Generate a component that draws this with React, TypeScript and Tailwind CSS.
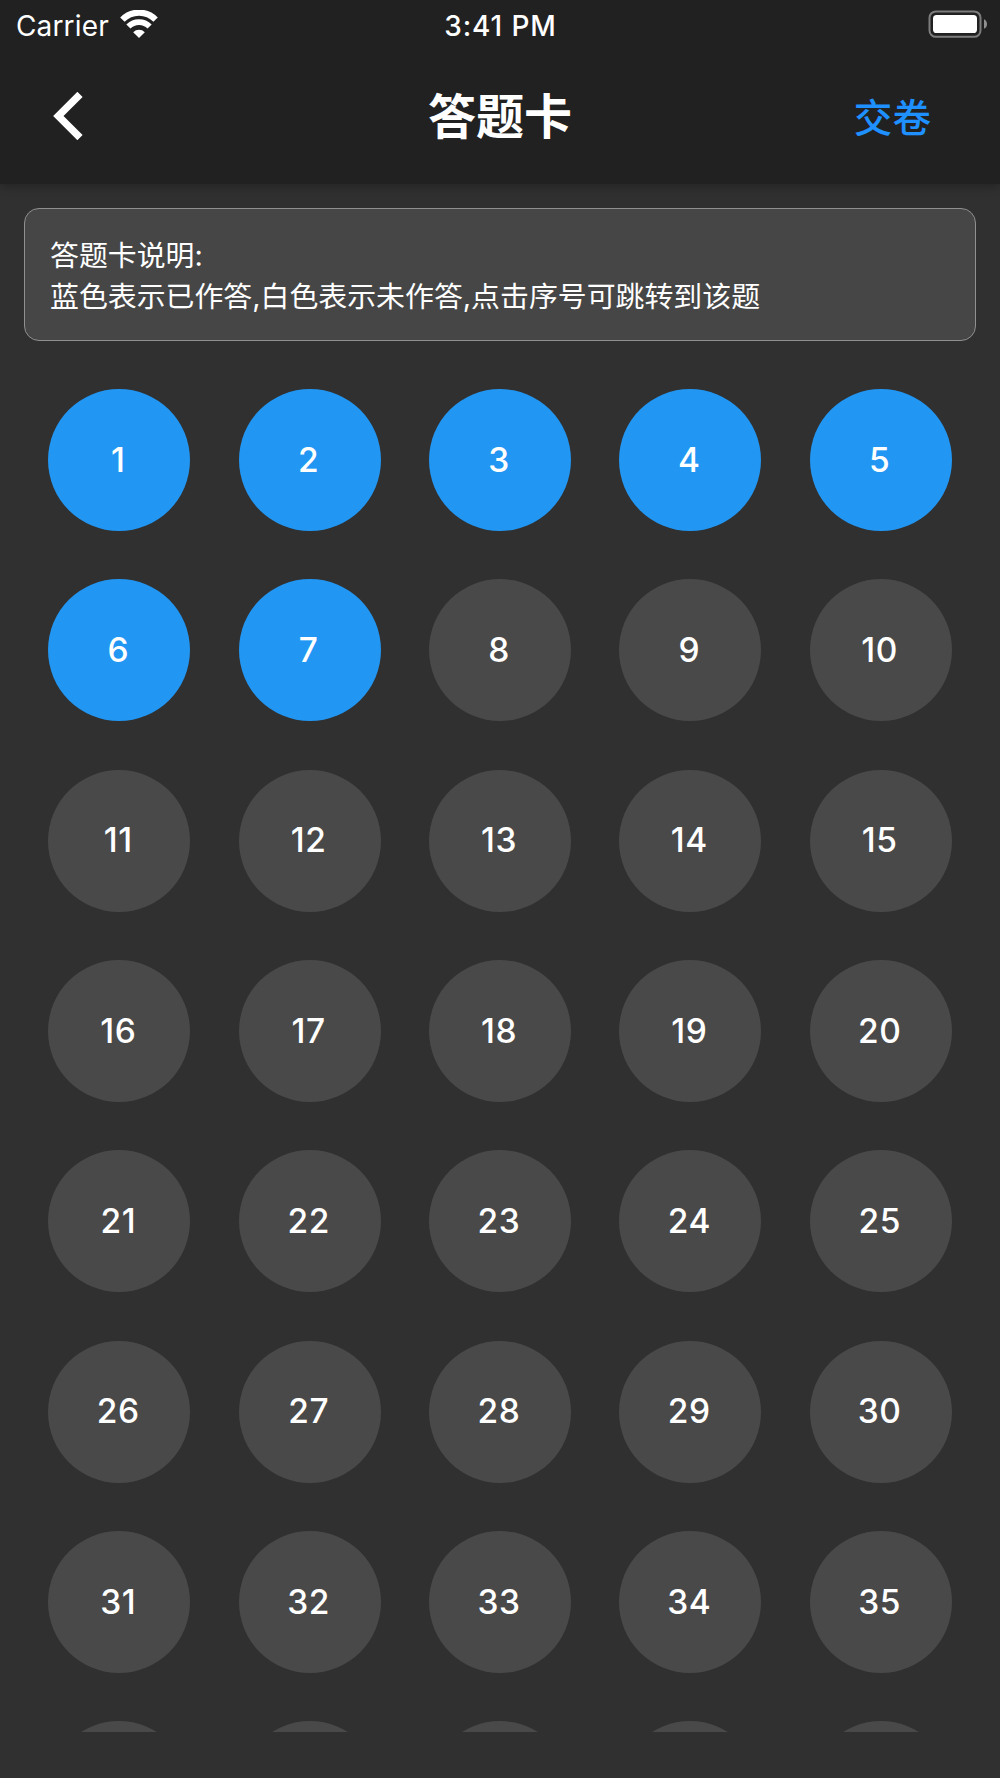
import { useState } from 'react';

const TOTAL = 35;
const ANSWERED = 7;
const COLUMNS = 5;

function WifiIcon() {
  return (
    <svg className="w-[38px] h-[28px]" viewBox="0 0 38 28" fill="none">
      <path d="M2.4 9.6A23.3 23.3 0 0 1 35.6 9.6" stroke="#fff" strokeWidth="6.2" />
      <path d="M8.4 16.6A14.8 14.8 0 0 1 29.6 16.6" stroke="#fff" strokeWidth="5.8" />
      <path d="M19 28L13.2 22.2A8.3 8.3 0 0 1 24.8 22.2Z" fill="#fff" />
    </svg>
  );
}

function BatteryIcon() {
  return (
    <svg className="w-[60px] h-[28px]" viewBox="0 0 60 28" fill="none">
      <rect x="1.5" y="1.4" width="51" height="25.4" rx="6.4" stroke="#7d7d7d" strokeWidth="2" />
      <rect x="5" y="5" width="44" height="18" rx="3.6" fill="#fff" />
      <path d="M56 9.2C60 10.6 60 17.4 56 18.8Z" fill="#909090" />
    </svg>
  );
}

function StatusBar() {
  return (
    <div className="grid grid-cols-3 items-center h-[48px] pl-[16px] pr-[12px] text-[28px] leading-none">
      <div className="flex items-center gap-[11px]">
        <span className="pt-[3px] tracking-[0.15px]">Carrier</span>
        <WifiIcon />
      </div>
      <div className="pt-[3px] pr-[3px] text-center font-[550] tracking-[0.9px] whitespace-nowrap">3:41 PM</div>
      <div className="flex justify-end">
        <BatteryIcon />
      </div>
    </div>
  );
}

function Header() {
  return (
    <header className="relative z-10 h-[184px] shrink-0 bg-[#212121] shadow-[0_2px_10px_rgba(0,0,0,0.3)]">
      <StatusBar />
      <div className="grid grid-cols-3 items-center h-[136px]">
        <button className="ml-[52px] justify-self-start">
          <svg className="w-[31px] h-[48px]" viewBox="0 0 31 48" fill="none">
            <path d="M28 2.4L6.4 24L28 45.6" stroke="#fff" strokeWidth="7.4" />
          </svg>
        </button>
        <h1 className="pt-[2px] text-center text-[48px] leading-none font-bold">答题卡</h1>
        <button className="mr-[69px] pt-[4px] justify-self-end text-[38.6px] leading-none font-medium text-[#1e90ff]">
          交卷
        </button>
      </div>
    </header>
  );
}

export default function App() {
  const [current, setCurrent] = useState(1);
  const questions = Array.from({ length: TOTAL }, (_, i) => i + 1);
  const nextRow = Array.from({ length: COLUMNS }, (_, i) => i);

  return (
    <div className="flex flex-col w-[1000px] h-[1778px] overflow-hidden bg-[#303030] text-white font-[Inter,'Noto_Sans_CJK_SC',sans-serif]">
      <Header />

      {/* Description */}
      <section className="mx-[24px] mt-[24px] h-[133px] shrink-0 rounded-[15px] border border-[#909090] bg-[#464646] px-[25px] pt-[25.5px] text-[28.9px] leading-[41px]">
        <p>答题卡说明:</p>
        <p className="whitespace-nowrap">蓝色表示已作答,白色表示未作答,点击序号可跳转到该题</p>
      </section>

      {/* Answer sheet */}
      <main className="mb-[46px] flex-1 overflow-hidden px-[48.3px] pt-[48px]">
        <div className="grid grid-cols-5 gap-[48.3px]">
          {questions.map((n) => (
            <button
              key={n}
              aria-current={n === current}
              onClick={() => setCurrent(n)}
              className={`flex aspect-square items-center justify-center rounded-full pr-[2px] pt-px text-[33.5px] leading-none font-[550] tracking-[0.6px] ${
                n <= ANSWERED ? 'bg-[#2296f3]' : 'bg-[#494949]'
              }`}
            >
              {n}
            </button>
          ))}
          {/* Top edge of the row below the fold */}
          {nextRow.map((i) => (
            <div key={i} className="aspect-square rounded-full bg-[#494949]" />
          ))}
        </div>
      </main>
    </div>
  );
}
